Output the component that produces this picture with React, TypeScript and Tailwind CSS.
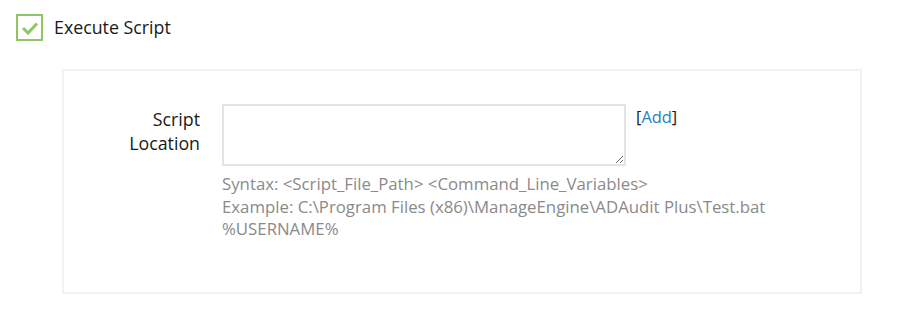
export default function App() {
    return (
        <div className="w-[900px] h-[318px] bg-white font-['Open_Sans',sans-serif] pt-[14px]">
            {/* header checkbox */}
            <div className="flex items-center pl-4">
                <div className="w-[27px] h-[27px] border-2 border-[#8cc665] flex items-center justify-center">
                    <svg width="18" height="14" viewBox="0 0 18 14">
                        <path d="M2 7 L7 12 L16 2.5" fill="none" stroke="#8cc665" strokeWidth="3" />
                    </svg>
                </div>
                <span className="ml-[11px] text-[17.8px] text-[#1a1a1a]">Execute Script</span>
            </div>

            <div className="ml-[62px] mt-[28px] w-[800px] h-[225px] border-2 border-[#f2f2f2] pt-[33px]">
                <div className="flex">
                    <div className="w-[136px] text-right text-[17.8px] leading-[24px] text-[#1a1a1a] pt-[3px]">
                        Script<br />Location
                    </div>
                    <div className="ml-[22px]">
                        <div className="flex items-start">
                            <textarea className="w-[404px] h-[62px] border-2 border-[#e1e5e4] outline-none resize" />
                            <span className="ml-[10px] mt-[1px] text-[16.4px] leading-[24px] text-[#1a1a1a]">
                                [<span className="text-[#2a7fc2]">Add</span>]
                            </span>
                        </div>
                        <div className="mt-[7px] w-[600px] text-[16.8px] leading-[22.5px] text-[#8a8a8a]">
                            Syntax: &lt;Script_File_Path&gt; &lt;Command_Line_Variables&gt;<br />
                            Example: C:\Program Files (x86)\ManageEngine\ADAudit Plus\Test.bat %USERNAME%
                        </div>
                    </div>
                </div>
            </div>
        </div>
    );
}
